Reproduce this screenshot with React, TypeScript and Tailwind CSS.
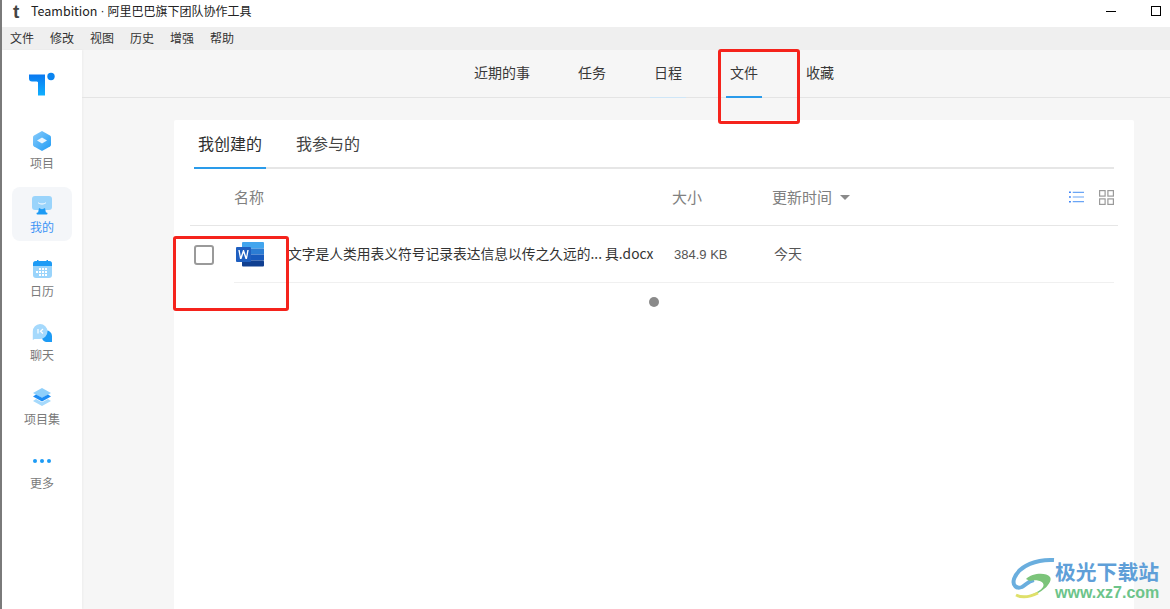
const font = { fontFamily: '"Noto Sans CJK SC", "Liberation Sans", sans-serif' }
const latin = { fontFamily: '"Liberation Sans", sans-serif' }

function ProjectIcon() {
  return (
    <svg width="18" height="20" viewBox="0 0 18 20">
      <defs>
        <linearGradient id="prj" x1="0" y1="0" x2="1" y2="1">
          <stop offset="0" stopColor="#8accfb" />
          <stop offset="1" stopColor="#1d9bf5" />
        </linearGradient>
      </defs>
      <path d="M9 0l8 4.500a2 2 0 0 1 1 1.700v7.600a2 2 0 0 1-1 1.700L9 20l-8-4.500a2 2 0 0 1-1-1.700V6.200a2 2 0 0 1 1-1.700z" fill="url(#prj)" />
      <path d="M9 6.500l5 3-5 3-5-3z" fill="#eaf6ff" />
    </svg>
  )
}

function MineIcon() {
  return (
    <svg width="20" height="19" viewBox="0 0 20 19">
      <rect x="0" y="0" width="20" height="14" rx="3" fill="#9ad4fb" />
      <path d="M6 6.500c1.500 2 6.500 2 8 0" stroke="#fff" strokeWidth="1" fill="none" />
      <path d="M7 12c2 1.500 4 1.500 6 0l1 5H6z" fill="#1d9bf5" />
      <rect x="4.500" y="16.500" width="11" height="2" rx="1" fill="#1d9bf5" />
    </svg>
  )
}

function CalendarIcon() {
  return (
    <svg width="19" height="18" viewBox="0 0 19 18">
      <rect x="0" y="1" width="19" height="17" rx="3" fill="#9ad4fb" />
      <path d="M0 6V4a3 3 0 0 1 3-3h13a3 3 0 0 1 3 3v2z" fill="#1d9bf5" />
      <rect x="4" y="0" width="1.500" height="3" fill="#1d9bf5" />
      <rect x="13.500" y="0" width="1.500" height="3" fill="#1d9bf5" />
      <g fill="#fff">
        <rect x="6" y="8" width="2" height="2" />
        <rect x="9" y="8" width="2" height="2" />
        <rect x="12" y="8" width="2" height="2" />
        <rect x="3" y="11" width="2" height="2" />
        <rect x="6" y="11" width="2" height="2" />
        <rect x="9" y="11" width="2" height="2" />
        <rect x="12" y="11" width="2" height="2" />
        <rect x="6" y="14" width="2" height="2" />
        <rect x="9" y="14" width="2" height="2" />
        <rect x="12" y="14" width="2" height="2" />
      </g>
    </svg>
  )
}

function ChatIcon() {
  return (
    <svg width="20" height="19" viewBox="0 0 20 19">
      <path d="M14 6.500a5.500 5.500 0 0 1 6 5.500v6h-6a6 6 0 0 1 0-11.500z" fill="#1d9bf5" />
      <path d="M8 0a7.500 7.500 0 0 1 0 15H2.500L.8 16V7.500A7.500 7.500 0 0 1 8 0z" fill="#a5d9fc" />
      <path d="M6 5v4.500M11 5L8.500 7.200 11 9.500" stroke="#fff" strokeWidth="1.200" fill="none" />
    </svg>
  )
}

function LayersIcon() {
  return (
    <svg width="18" height="18" viewBox="0 0 18 18">
      <path d="M9 0l9 5-9 5-9-5z" fill="#8fd0fb" />
      <path d="M3 6.500l6 3.300 6-3.300 3 2-9 5-9-5z" fill="#1d8df5" />
      <path d="M3 11l6 3.300 6-3.300 3 2-9 5-9-5z" fill="#a5d9fc" />
    </svg>
  )
}

function MoreIcon() {
  return (
    <div className="flex h-[18px] items-center gap-[3px]">
      <span className="h-[4px] w-[4px] rounded-full bg-[#1d9bf5]" />
      <span className="h-[4px] w-[4px] rounded-full bg-[#1d9bf5]" />
      <span className="h-[4px] w-[4px] rounded-full bg-[#1d9bf5]" />
    </div>
  )
}

function WordIcon() {
  return (
    <svg width="28" height="25" viewBox="0 0 28 25">
      <rect x="6" y="0" width="22" height="6.500" rx="1" fill="#41a5ee" />
      <rect x="6" y="6.500" width="22" height="6" fill="#2b7cd3" />
      <rect x="6" y="12.500" width="22" height="6" fill="#185abd" />
      <rect x="6" y="18.500" width="22" height="6" rx="1" fill="#103f91" />
      <rect x="0" y="5" width="15" height="15" rx="1" fill="#1f5fc0" />
      <path d="M2.300 8l1.700 9h1.500l2-6 2 6H11l1.700-9h-1.400L10.200 14.500 8 8H7L4.800 14.500 3.700 8z" fill="#fff" />
    </svg>
  )
}

const sideItems = [
  { label: '项目', icon: <ProjectIcon /> },
  { label: '我的', icon: <MineIcon />, active: true },
  { label: '日历', icon: <CalendarIcon /> },
  { label: '聊天', icon: <ChatIcon /> },
  { label: '项目集', icon: <LayersIcon /> },
  { label: '更多', icon: <MoreIcon /> },
]

const navTabs = ['近期的事', '任务', '日程', '文件', '收藏']

export default function App() {
  return (
    <div style={font} className="relative flex h-[609px] w-[1170px] flex-col overflow-hidden border-l-2 border-[#7a7a7a] bg-[#f6f6f6] text-[#383838]">
      <div className="flex h-[27px] shrink-0 items-center bg-white pb-[5px]">
        <span className="ml-[11px] w-[18px] text-[19px] leading-none font-bold text-[#444]" style={latin}>t</span>
        <span className="flex items-center text-[12px] leading-none text-[#222]">
          <span className="text-[12.5px]">Teambition</span>
          <span className="mx-[3px]" style={latin}>·</span>
          <span>阿里巴巴旗下团队协作工具</span>
        </span>
        <div className="mr-[9px] ml-auto flex items-center gap-[35px]">
          <span className="h-px w-[10px] bg-black" />
          <span className="h-[10px] w-[10px] border border-black" />
        </div>
      </div>

      <div className="flex h-[23px] shrink-0 items-center gap-[16px] bg-[#efefef] pb-[1px] pl-[8px] text-[12px] leading-none text-[#333]">
        {['文件', '修改', '视图', '历史', '增强', '帮助'].map(m => (
          <span key={m} className="w-[24px]">{m}</span>
        ))}
      </div>

      <div className="flex min-h-0 flex-1">
        <aside className="flex w-[80px] shrink-0 flex-col items-center bg-white shadow-[1px_0_2px_rgba(0,0,0,0.04)]">
          <svg className="mt-[20px] mb-[27px] h-[26px] w-[28px]" viewBox="0 0 28 25">
            <defs>
              <linearGradient id="logo" x1="0" y1="0" x2="0" y2="1">
                <stop offset="0" stopColor="#0a78f0" />
                <stop offset="1" stopColor="#10b0ff" />
              </linearGradient>
            </defs>
            <path d="M1 4h16v21h-7V12c0-1-1-1-2-1H4c-2 0-3-1-3-3z" fill="url(#logo)" />
            <circle cx="23" cy="6" r="3.700" fill="#0a84f0" />
          </svg>
          {sideItems.map(item => (
            <div
              key={item.label}
              className={`mb-[10px] flex h-[54px] w-[60px] flex-col items-center gap-[4px] rounded-[8px] pt-[8px] text-[12px] leading-[16px] ${
                item.active ? 'bg-[#f4f6f9] text-[#3b93f5]' : 'text-[#7a7a7a]'
              }`}
            >
              <div className="flex h-[20px] items-center">{item.icon}</div>
              <span>{item.label}</span>
            </div>
          ))}
        </aside>

        <main className="flex min-w-0 flex-1 flex-col">
          <nav className="flex h-[48px] shrink-0 justify-center gap-[40px] border-b border-[#e4e4e4] pl-[56px] text-[14px]">
            {navTabs.map(t => (
              <div
                key={t}
                className={`-mb-px flex items-center px-[4px] pb-[2px] ${
                  t === '文件' ? 'border-b-2 border-[#2a9bea]' : t === '日程' ? 'border-b border-[#cfe6f7]' : 'border-b border-transparent'
                }`}
              >
                {t}
              </div>
            ))}
          </nav>

          <section className="mt-[22px] mr-[36px] ml-[92px] flex-1 rounded-t-[2px] bg-white pr-[20px] pl-[16px]">
            <div className="ml-[4px] flex h-[49px] items-end gap-[26px] border-b-2 border-[#e6e6e6]">
              <div className="-mb-[2px] flex h-[49px] w-[72px] items-center justify-center border-b-2 border-[#2a9bea] pb-[2px] text-[16px] text-[#2f2f2f]">我创建的</div>
              <div className="flex h-[47px] w-[72px] items-center justify-center pb-[2px] text-[16px] text-[#444]">我参与的</div>
            </div>

            <div className="-mr-[4px] flex h-[57px] items-center border-b border-[#e6e6e6] text-[15px] text-[#808080]">
              <span className="ml-[44px] w-[438px]">名称</span>
              <span className="w-[100px]">大小</span>
              <span>更新时间</span>
              <span className="ml-[8px] h-0 w-0 border-x-[5px] border-t-[5px] border-x-transparent border-t-[#8a8a8a]" />
              <div className="mr-[4px] ml-auto flex items-center gap-[15px]">
                <svg width="15" height="14" viewBox="0 0 16 14" fill="none">
                  <path d="M4 2h12M4 7h12M4 12h12" stroke="#6aa5f5" strokeWidth="1.300" />
                  <path d="M0 2h2M0 7h2M0 12h2" stroke="#3b82f6" strokeWidth="1.500" />
                </svg>
                <svg width="15" height="15" viewBox="0 0 15 15" fill="none" stroke="#9a9a9a" strokeWidth="1.200">
                  <rect x=".6" y=".6" width="5.500" height="5.500" />
                  <rect x="8.900" y=".6" width="5.500" height="5.500" />
                  <rect x=".6" y="8.900" width="5.500" height="5.500" />
                  <rect x="8.900" y="8.900" width="5.500" height="5.500" />
                </svg>
              </div>
            </div>

            <div className="flex h-[57px] items-center">
              <span className="ml-[4px] h-[20px] w-[20px] rounded-[3px] border-2 border-[#9a9a9a]" />
              <div className="ml-[20px] flex h-[57px] flex-1 items-center border-b border-[#f0f0f0] text-[13px] text-[#555]">
                <div className="ml-[2px] w-[52px]"><WordIcon /></div>
                <span className="w-[386px] pb-[1px] text-[13.75px] whitespace-nowrap text-[#333]">文字是人类用表义符号记录表达信息以传之久远的... 具.docx</span>
                <span className="w-[100px] pt-[1px]" style={latin}>384.9 KB</span>
                <span className="pb-[1px] text-[14px]">今天</span>
              </div>
            </div>

            <div className="mt-[14px] ml-[459px] h-[10px] w-[10px] rounded-full bg-[#8a8a8a]" />
          </section>
        </main>
      </div>

      {/* red annotation boxes drawn over the page */}
      <div className="absolute top-[49px] left-[716px] h-[75px] w-[82px] rounded-[3px] border-[3px] border-[#f5231c]" />
      <div className="absolute top-[236px] left-[171px] h-[75px] w-[116px] rounded-[3px] border-[3px] border-[#f5231c]" />

      {/* watermark */}
      <div className="absolute top-[557px] left-[1009px] flex items-start">
        <svg width="44" height="44" viewBox="0 0 44 44" fill="none">
          <path d="M43 3C27 2 8 8 3 22c-2 7 3 10 8 8 4-2 6-6 12-7" stroke="#6aaede" strokeWidth="4" />
          <path d="M15 22c6-6 20-7 24-2 3 5-6 14-16 18-8 3-13 3-15 2 8 0 20-4 24-10 3-5-6-8-13-6z" fill="#7cc47a" />
          <path d="M5 38c6 3 14 2 22-2" stroke="#dfe06a" strokeWidth="3" />
        </svg>
        <div className="mt-[3px] flex flex-col gap-[3px]">
          <span className="text-[20.8px] leading-[22px] font-bold text-[#5f9fd8]">极光下载站</span>
          <span className="text-[16px] leading-[16px] font-bold text-[#6cc48a]" style={latin}>www.xz7.com</span>
        </div>
      </div>
    </div>
  )
}
